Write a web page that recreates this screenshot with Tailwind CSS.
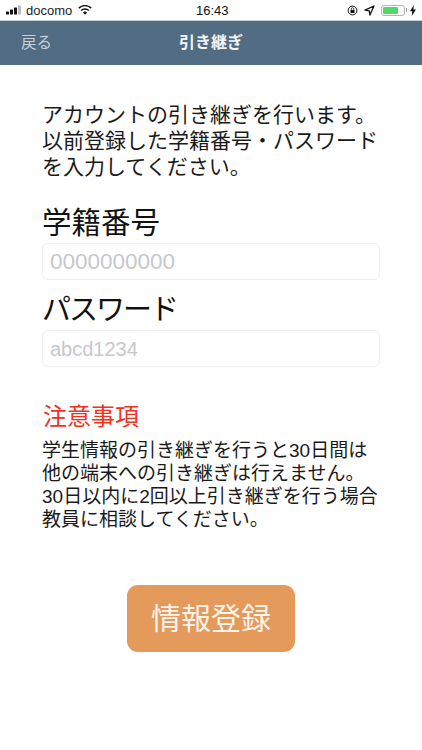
<!DOCTYPE html>
<html lang="ja">
<head>
<meta charset="utf-8">
<script src="https://cdn.jsdelivr.net/npm/@tailwindcss/browser@4"></script>
</head>
<body class="bg-white font-['Liberation_Sans','Noto_Sans_CJK_JP',sans-serif] text-black">
<div class="w-[422px] h-[750px] overflow-hidden flex flex-col">
  <div class="h-[20px] flex items-center justify-between pl-[6px] pr-[6px] relative">
    <div class="flex items-center gap-[3px]">
      <svg width="17" height="10" viewBox="0 0 17 10"><rect x="0" y="6.5" width="3" height="3" rx=".6" fill="#111"/><rect x="4" y="4.5" width="3" height="5" rx=".6" fill="#111"/><rect x="8" y="2.5" width="3" height="7" rx=".6" fill="#111"/><rect x="12" y="0.5" width="3" height="9" rx=".6" fill="#bbb"/></svg>
      <span class="text-[13px] leading-none text-[#222]">docomo</span>
      <svg class="ml-[3px]" width="14" height="10" viewBox="0 0 14 10"><path d="M7 9.8 4.9 7.5a3 3 0 0 1 4.2 0Z" fill="#111"/><path d="M3.6 6.1a4.9 4.9 0 0 1 6.8 0l1-1.1a6.4 6.4 0 0 0-8.8 0Z" fill="#111"/><path d="M1.3 3.7a8.1 8.1 0 0 1 11.4 0l1-1.1a9.6 9.6 0 0 0-13.4 0Z" fill="#111"/></svg>
    </div>
    <span class="absolute left-[196px] top-[3px] text-[13px] leading-[16px] text-[#111]">16:43</span>
    <div class="flex items-center gap-[5px]">
      <svg width="11" height="11" viewBox="0 0 11 11"><circle cx="5.5" cy="5.5" r="4.4" fill="none" stroke="#111" stroke-width="1"/><rect x="3.5" y="5" width="4" height="3" fill="#111"/><path d="M4.2 5V4a1.3 1.3 0 0 1 2.6 0v1" fill="none" stroke="#111" stroke-width=".8"/></svg>
      <svg class="ml-[1px]" width="11" height="11" viewBox="0 0 11 11"><path d="M10 1 1 5.2l4.3.6.6 4.2Z" fill="none" stroke="#111" stroke-width="1.3" stroke-linejoin="round"/></svg>
      <div class="ml-[1px] flex items-center">
        <div class="w-[24px] h-[11px] rounded-[3px] border border-[#b5b5b5] p-[1px]"><div class="w-[15px] h-full rounded-[1px] bg-[#4cd964]"></div></div>
        <div class="w-[1px] h-[4px] bg-[#999] ml-[1px]"></div>
      </div>
      <svg class="-ml-[2px]" width="6" height="11" viewBox="0 0 6 11"><path d="M3.8 0 0 6.2h2.3L1.8 11 6 4.4H3.4Z" fill="#111"/></svg>
    </div>
  </div>
  <div class="h-[45px] bg-[#526c84] border-t border-[#c4cfd8] flex items-center relative">
    <span class="absolute left-[21px] text-[15.5px] text-[#c6d0da]">戻る</span>
    <span class="w-full text-center text-[16px] font-bold text-[#f2f4f6]">引き継ぎ</span>
  </div>
  <div class="pl-[43px] pr-[42px] flex flex-col">
    <p class="mt-[37px] -ml-[1px] text-[21px] leading-[26px] text-[#1a1a1a] whitespace-nowrap">アカウントの引き継ぎを行います。<br>以前登録した学籍番号・パスワード<br>を入力してください。</p>
    <h2 class="mt-[25px] -ml-[1px] text-[29.5px] leading-[36px] font-normal text-[#111]">学籍番号</h2>
    <div class="mt-[2px] -ml-[1px] h-[37px] rounded-[6px] border border-[#eeeeee] flex items-center pl-[7px] text-[22.5px] text-[#c7c7cd]">0000000000</div>
    <h2 class="mt-[12px] -ml-[1px] text-[29px] leading-[36px] tracking-[-2px] font-normal text-[#111]">パスワード</h2>
    <div class="mt-[2px] -ml-[1px] h-[37px] rounded-[6px] border border-[#eeeeee] flex items-center pl-[7px] text-[20px] text-[#c7c7cd]">abcd1234</div>
    <h3 class="mt-[35px] text-[24px] leading-[30px] font-normal text-[#f0321e]">注意事項</h3>
    <p class="mt-[7px] -ml-[1px] text-[19px] leading-[23px] text-[#1a1a1a] whitespace-nowrap">学生情報の引き継ぎを行うと30日間は<br>他の端末への引き継ぎは行えません。<br>30日以内に2回以上引き継ぎを行う場合<br>教員に相談してください。</p>
    <div class="mt-[54px] ml-[84px] w-[168px] h-[67px] rounded-[11px] bg-[#e39a5b] flex items-center justify-center text-[30px] text-[#fbf3ea]">情報登録</div>
  </div>
</div>
</body>
</html>
